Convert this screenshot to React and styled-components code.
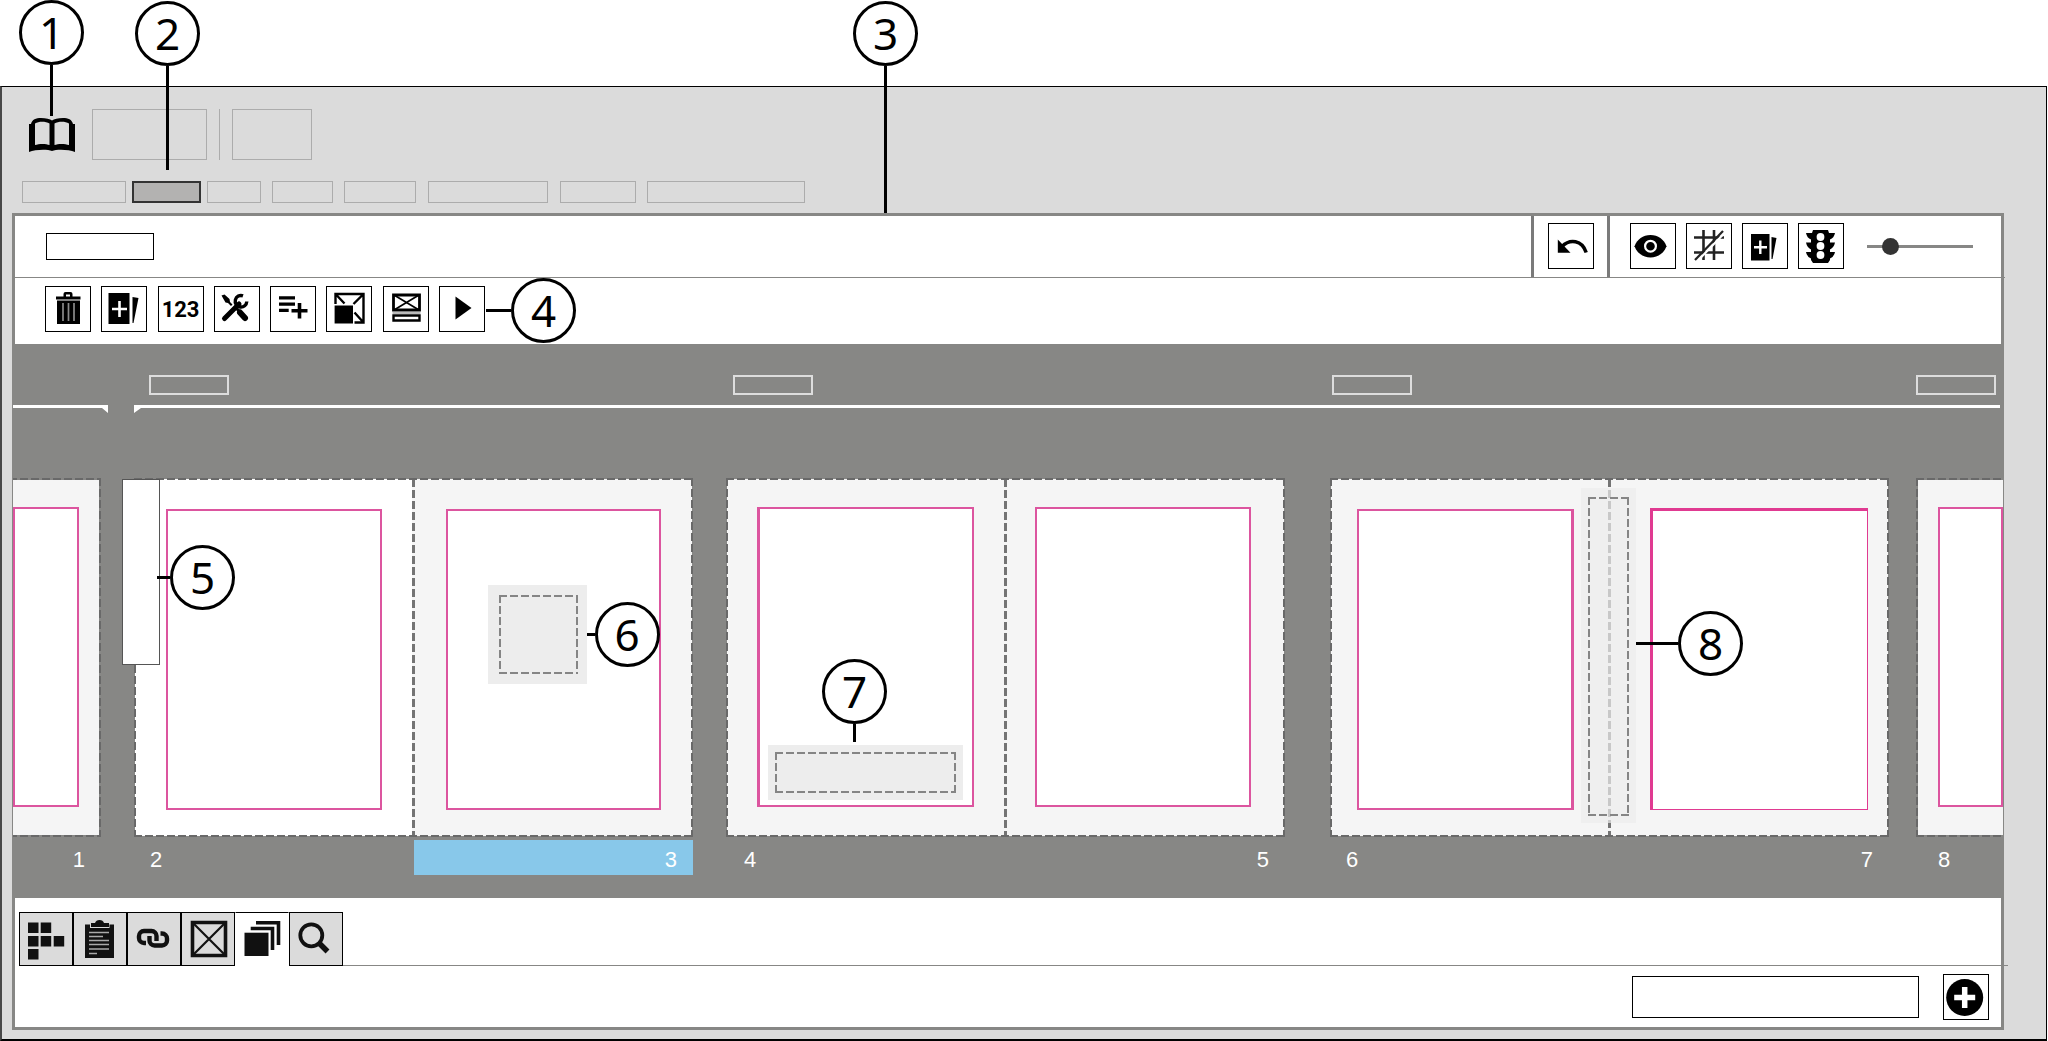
import React from 'react';
import styled, { createGlobalStyle, css } from 'styled-components';

const GlobalStyle = createGlobalStyle`
  * {
    box-sizing: border-box;
  }

  body {
    margin: 0;
    background: #ffffff;
    font-family: "Liberation Sans", Arial, sans-serif;
  }

  button,
  input {
    margin: 0;
    padding: 0;
    font: inherit;
  }
`;

const line = '#878785';
const pink = '#dc559f';

const dashX = color => `repeating-linear-gradient(90deg, ${color} 0 8px, transparent 8px 11px)`;
const dashY = color => `repeating-linear-gradient(180deg, ${color} 0 8px, transparent 8px 11px)`;

const dashedFrame = (color, size) => css`
  background-image: ${dashX(color)}, ${dashX(color)}, ${dashY(color)}, ${dashY(color)};
  background-position: top, bottom, left, right;
  background-size: 100% ${size}, 100% ${size}, ${size} 100%, ${size} 100%;
  background-repeat: no-repeat;
`;

const Window = styled.div`
  margin: 86px 1px 0 0;
  border: solid #000000;
  border-width: 1px 1px 2px 2px;
  border-left-color: #484848;
  background: #dbdbdb;
`;

const Header = styled.header`
  display: flex;
  align-items: center;
  gap: 12px;
  padding: 22px 27px 0;
`;

const BookLink = styled.a`
  position: relative;
  display: block;
  width: 46px;
  height: 34px;
  margin-right: 5px;
  color: #000000;
`;

const HeaderButton = styled.button`
  width: ${props => props.$width};
  height: 51px;
  border: 1px solid #acacac;
  background: none;
`;

const HeaderDivider = styled.span`
  width: 1px;
  height: 51px;
  background: #acacac;
`;

const Nav = styled.nav`
  display: flex;
  padding: 21px 20px 0;
`;

const NavButton = styled.button`
  position: relative;
  width: ${props => props.$width};
  height: 22px;
  margin-left: ${props => props.$before};
  border: ${props => (props.$active ? '2px solid #333333' : '1px solid #acacac')};
  background: ${props => (props.$active ? '#b3b2b1' : 'none')};
`;

const Panel = styled.main`
  position: relative;
  margin: 10px 42px 9px 10px;
  border: 3px solid ${line};
  background: #ffffff;
`;

const TitleBar = styled.div`
  display: flex;
  height: 61px;
`;

const TitleCell = styled.div`
  display: flex;
  flex: 1;
  align-items: center;
  padding-left: 31px;
`;

const TitleField = styled.input`
  width: 108px;
  height: 27px;
  border: 1px solid #000000;
  background: #ffffff;
`;

const ToolGroup = styled.div`
  display: flex;
  align-items: center;
  gap: 10px;
  padding: ${props => props.$padding};
  border-left: 3px solid #7a7a7a;
`;

const Rule = styled.div`
  height: 1px;
  margin-right: -4px;
  background: ${line};
`;

const ToolButton = styled.button`
  position: relative;
  display: flex;
  align-items: center;
  justify-content: center;
  flex: none;
  width: 46px;
  height: 46px;
  border: 1px solid #000000;
  background: #ffffff;
  color: #000000;

  svg {
    display: block;
    width: 44px;
    height: 44px;
  }
`;

const NumberingText = styled.span`
  font-family: Roboto, sans-serif;
  font-size: 22px;
  font-weight: 700;
`;

const Zoom = styled.input`
  appearance: none;
  width: 106px;
  height: 18px;
  margin-left: 13px;
  background: linear-gradient(${line}, ${line}) center / 100% 3px no-repeat;

  &::-webkit-slider-thumb {
    appearance: none;
    width: 17px;
    height: 17px;
    border-radius: 50%;
    background: #333333;
  }
`;

const Toolbar = styled.div`
  display: flex;
  justify-content: space-between;
  width: 470px;
  padding: 8px 0 12px 30px;
`;

const Canvas = styled.section`
  margin: 0 -2px;
  padding: 31px 0 23px;
  background: ${line};
`;

const SpreadGrid = styled.div`
  display: grid;
  grid-template-columns: 88fr 33px 559fr 33px 559fr 45px 559fr 27px 87fr;
`;

const SpreadLabel = styled.div`
  grid-column: ${props => props.$column};
  width: 80px;
  height: 20px;
  margin-left: ${props => props.$indent || 0};
  border: 2px solid #dddddd;
`;

const Brackets = styled.div`
  display: grid;
  grid-template-columns: 95fr 26px 1866fr;
  height: 8px;
  margin: 10px 3px 65px 0;
`;

const Bracket = styled.div`
  grid-column: ${props => props.$column};
  background: #ffffff;
  clip-path: ${props => (props.$open === 'left'
    ? 'polygon(0 0, 100% 0, 100% 100%, calc(100% - 6px) 3px, 0 3px)'
    : 'polygon(0 0, 100% 0, 100% 3px, 7px 3px, 0 100%)')};
`;

const Spread = styled.div`
  position: relative;
  grid-column: ${props => props.$column};
  display: grid;
  grid-auto-columns: 1fr;
  grid-auto-flow: column;
  height: 359px;
  padding: ${props => props.$padding || '1px'};
  overflow: ${props => (props.$cut ? 'hidden' : 'visible')};

  &::after {
    content: "";
    position: absolute;
    inset: ${props => props.$cut || '0'};
    ${dashedFrame('#696969', '2px')}
  }
`;

const Page = styled.div`
  display: flex;
  padding: ${props => props.$padding};
  background: ${props => props.$color || '#f5f5f5'};

  & + & {
    margin-left: -2px;
    background-image: ${dashY('#747474')};
    background-size: 3px 100%;
    background-repeat: no-repeat;
  }
`;

const SafeArea = styled.div`
  position: relative;
  flex: 1;
  border: 2px solid ${props => props.$color || pink};
  border-width: ${props => props.$border || '2px'};
  background: #ffffff;
`;

const SpineTab = styled.div`
  position: absolute;
  z-index: 1;
  top: 1px;
  left: -12px;
  width: 38px;
  height: 186px;
  border: 1px solid #555555;
  background: #ffffff;
`;

// a drop zone lying freely on a page or over the fold
const Placeholder = styled.div`
  position: absolute;
  z-index: 1;
  left: ${props => props.$left};
  top: ${props => props.$top};
  width: ${props => props.$width};
  height: ${props => props.$height};
  background: rgba(237, 237, 237, ${props => props.$opacity || 1});

  &::before {
    content: "";
    position: absolute;
    inset: ${props => props.$inset};
    ${dashedFrame('#858585', '2px')}
  }
`;

const PageNumbers = styled.div`
  grid-column: ${props => props.$column};
  display: grid;
  grid-auto-columns: 1fr;
  grid-auto-flow: column;
  margin-top: 3px;
`;

const PageNumber = styled.span`
  padding: 5px ${props => props.$indent || '16px'} 0;
  background: ${props => (props.$selected ? '#88c8ea' : 'none')};
  color: #ffffff;
  font-size: 22px;
  line-height: 30px;
  text-align: ${props => props.$align};
`;

const TabStrip = styled.div`
  display: flex;
  margin-right: -7px;
  padding: 14px 0 0 4px;

  &::after {
    content: "";
    flex: 1;
    border-bottom: 1px solid ${line};
  }
`;

const Tab = styled.button`
  width: 54px;
  height: 54px;
  border: 1px solid #000000;
  border-color: ${props => (props.$active ? '#000000 transparent transparent' : '#000000')};
  background: ${props => (props.$active ? '#ffffff' : '#dbdbdb')};
  color: #111111;

  svg {
    display: block;
    width: 52px;
    height: 52px;
  }
`;

const Footer = styled.footer`
  display: flex;
  align-items: center;
  justify-content: flex-end;
  gap: 24px;
  padding: 8px 12px 7px;
`;

const SearchField = styled.input`
  width: 287px;
  height: 42px;
  border: 1px solid #000000;
  background: #ffffff;
`;

const CalloutBox = styled.span`
  position: absolute;
  z-index: 2;
  left: ${props => props.$left};
  top: ${props => props.$top || 'auto'};
  bottom: ${props => props.$bottom || 'auto'};
  display: flex;
  flex-direction: ${props => (props.$side ? 'row-reverse' : 'column')};
  align-items: center;
  pointer-events: none;
`;

const Disc = styled.span`
  display: block;
  width: 65px;
  height: 65px;
  border: 3px solid #000000;
  border-radius: 50%;
  background: #ffffff;
  color: #000000;
  font-family: "Noto Sans", "Open Sans", sans-serif;
  font-size: 44px;
  line-height: 59px;
  text-align: center;
`;

const Stem = styled.span`
  width: ${props => (props.$side ? props.$length : '3px')};
  height: ${props => (props.$side ? '3px' : props.$length)};
  background: #000000;
`;

const Callout = ({ number, stem, side, left, top, bottom }) => (
  <CalloutBox $side={side} $left={left} $top={top} $bottom={bottom}>
    <Disc>{number}</Disc>
    <Stem $side={side} $length={stem} />
  </CalloutBox>
);

const ToolIcon = ({ children }) => (
  <svg viewBox="1 1 44 44" fill="currentColor" aria-hidden="true">{children}</svg>
);

const TabIcon = ({ children }) => (
  <svg viewBox="1 1 52 52" fill="currentColor" aria-hidden="true">{children}</svg>
);

const BookIcon = () => (
  <svg width="46" height="34" viewBox="0 0 46 34" fill="currentColor" aria-hidden="true">
    <path
      fillRule="evenodd"
      d="M0 6H2C3 1.500 7 0 12 0C17 0 21 1 23 2.500C25 1 29 0 34 0C39 0 43 1.500 44 6H46V34C40 31.500 28 31 23 33C18 31 6 31.500 0 34ZM6 5.500V27C10 25.500 17 25.500 20.500 27V5.500C17 3.500 10 3 6 5.500ZM25.500 5.500V27C29 25.500 36 25.500 40 27V5.500C36 3 29 3.500 25.500 5.500Z"
    />
  </svg>
);

const TrashIcon = () => (
  <ToolIcon>
    <path d="M11 10.500h7.500V8q0-2 2-2h5q2 0 2 2v2.500H35.500V13.500H11zM21 8.500v2h4v-2z" fillRule="evenodd" />
    <path d="M12 14.500H35V38H12z" />
    <path d="M18 17v18M23.500 17v18M29 17v18" stroke="#8a8a8a" strokeWidth="1.700" />
  </ToolIcon>
);

const AddPageIcon = () => (
  <ToolIcon>
    <path d="M7.500 7H28.500V38H7.500zM31.500 11L37.500 12L32.500 37H31.500z" />
    <path d="M18.500 15v16M11 23h15" stroke="#ffffff" strokeWidth="2.600" />
  </ToolIcon>
);

const AddPageSmallIcon = () => (
  <ToolIcon>
    <path d="M9 11H27.500V37.500H9zM29.500 14L34.500 15L30.500 36H29.500z" />
    <path d="M18.300 17.500v13.500M12 24.300h13" stroke="#ffffff" strokeWidth="2.400" />
  </ToolIcon>
);

const ToolsIcon = () => (
  <ToolIcon>
    <path d="M10.500 32.500L25 18" stroke="currentColor" strokeWidth="5" strokeLinecap="round" />
    <path d="M29 9.800A5.800 5.800 0 1 0 32.800 15.500" fill="none" stroke="currentColor" strokeWidth="3.400" />
    <path d="M7.500 9.500L10.500 8.500L15.500 13L16 16L18.500 18.500L17 20L14 17L11.500 16.500z" />
    <path d="M26 26.500L31 32" stroke="currentColor" strokeWidth="6" strokeLinecap="round" />
    <path d="M22.500 22.500L26 26" stroke="currentColor" strokeWidth="3" />
  </ToolIcon>
);

const ListAddIcon = () => (
  <ToolIcon>
    <path d="M9 10.300H25V13.500H9zM9 16.500H25V19.700H9zM9 22.700H18.700V25.900H9z" />
    <path d="M29.500 17v15.500M21.500 24.700h16" stroke="currentColor" strokeWidth="3.600" />
  </ToolIcon>
);

const ResizeIcon = () => (
  <ToolIcon>
    <path
      d="M9.500 18V8H37.500V36.500H28.500M9.500 8L18.500 17.500M37.500 8L27.500 18M28.500 26.500L37.500 36.500"
      fill="none"
      stroke="currentColor"
      strokeWidth="2.400"
    />
    <path d="M8.600 19.500H27V37.500H8.600z" />
  </ToolIcon>
);

const BoxListIcon = () => (
  <ToolIcon>
    <path d="M10.500 9H36.500V24H10.500z" fill="none" stroke="currentColor" strokeWidth="2.800" />
    <path d="M11 9L36 24M36 9L11 24" stroke="currentColor" strokeWidth="1.700" />
    <path d="M10.500 29.500H36.500V34.500H10.500z" fill="none" stroke="currentColor" strokeWidth="2.400" />
    <path d="M9.500 27H37.500" stroke="#777777" strokeWidth="1" />
  </ToolIcon>
);

const PlayIcon = () => (
  <ToolIcon>
    <path d="M16.500 10.500L32.500 22L16.500 33.500z" />
  </ToolIcon>
);

const UndoIcon = () => (
  <ToolIcon>
    <path d="M9.800 16.500L22.500 29.800H9.800z" />
    <path d="M14 23.500C22 15.500 34 17 38.200 29.500" fill="none" stroke="currentColor" strokeWidth="3.500" />
  </ToolIcon>
);

const EyeIcon = () => (
  <ToolIcon>
    <path d="M4.500 23.200C7 16.500 13 12 20.500 12S34 16.500 36.500 23.200C34 30 28 34.500 20.500 34.500S7 30 4.500 23.200z" />
    <circle cx="20.500" cy="23.200" r="5.400" fill="none" stroke="#ffffff" strokeWidth="2.200" />
  </ToolIcon>
);

const GridOffIcon = () => (
  <ToolIcon>
    <path d="M17.500 7v30M28 7v30M8 14.500h30M8 29.500h30" stroke="#222222" strokeWidth="2.600" />
    <path d="M39 9.500L11 38.500" stroke="#ffffff" strokeWidth="2.200" />
    <path d="M37 8L9 37" stroke="#222222" strokeWidth="2.200" />
  </ToolIcon>
);

const TrafficIcon = () => (
  <ToolIcon>
    <path d="M15 7H30L31 10H37Q36 15 32 16.500V19.500H37Q36 24.500 32 26.500V29H37Q36 34 32 35.500V37L30 40H15L13 37V35.500Q9 34 8 29H13V26.500Q9 24.500 8 19.500H13V16.500Q9 15 8 10H14z" />
    <g fill="#ffffff">
      <circle cx="22.500" cy="14" r="3.900" />
      <circle cx="22.500" cy="23" r="3.900" />
      <circle cx="22.500" cy="32" r="3.900" />
    </g>
  </ToolIcon>
);

const AddCircleIcon = () => (
  <ToolIcon>
    <circle cx="21.700" cy="23.500" r="18.500" />
    <path d="M21.700 13v21M11.200 23.500h21" stroke="#ffffff" strokeWidth="5.500" />
  </ToolIcon>
);

const BlocksIcon = () => (
  <TabIcon>
    <path d="M9 10.500h10.500v10.500H9zM21.700 10.500h10.500v10.500h-10.500zM9 24h10.500v10.500H9zM21.700 24h10.500v10.500h-10.500zM34.700 24h10.500v10.500h-10.500zM9 37h10.500v10.500H9z" />
  </TabIcon>
);

const ClipboardIcon = () => (
  <TabIcon>
    <path d="M12 12.500h5v3.500h19.500v-3.500h4.500v33.500H12zM18 15v-4h4q1-3 4.500-3t4.500 3h5v4z" />
    <path
      d="M16 20.500h20M16 24.500h14M16 28.500h20M16 32.500h20M16 37h20M16 41.500h8"
      stroke="#aaaaaa"
      strokeWidth="1.400"
    />
  </TabIcon>
);

const LinkIcon = () => (
  <TabIcon>
    <g fill="none" stroke="currentColor" strokeWidth="4.400">
      <path d="M19 31h-2a5 5 0 0 1-5-5v-2a5 5 0 0 1 5-5h7.500a5 5 0 0 1 5 5v5" />
      <path d="M33.500 21.500h1.500a5 5 0 0 1 5 5v2a5 5 0 0 1-5 5h-7.500a5 5 0 0 1-5-5v-4.500" />
    </g>
  </TabIcon>
);

const BoxIcon = () => (
  <TabIcon>
    <path d="M11.500 10.500H44.500V43.500H11.500z" fill="none" stroke="currentColor" strokeWidth="3.600" />
    <path d="M12 11L44 43M44 11L12 43" stroke="currentColor" strokeWidth="2.200" />
  </TabIcon>
);

const CopiesIcon = () => (
  <TabIcon>
    <path d="M9.500 20.700H33.500V44H9.500z" />
    <path d="M15.700 16.500H37.500V38M21 10.800H43.500V33" fill="none" stroke="currentColor" strokeWidth="3.600" />
  </TabIcon>
);

const SearchIcon = () => (
  <TabIcon>
    <circle cx="22.300" cy="23.300" r="11" fill="none" stroke="currentColor" strokeWidth="3.800" />
    <path d="M30 31L38.500 39.500" stroke="currentColor" strokeWidth="5.500" />
  </TabIcon>
);

const menus = [
  { label: 'Menu 1', width: '104px', before: '0px' },
  { label: 'Menu 2', width: '69px', before: '6px', active: true },
  { label: 'Menu 3', width: '54px', before: '6px' },
  { label: 'Menu 4', width: '61px', before: '11px' },
  { label: 'Menu 5', width: '72px', before: '11px' },
  { label: 'Menu 6', width: '120px', before: '12px' },
  { label: 'Menu 7', width: '76px', before: '12px' },
  { label: 'Menu 8', width: '158px', before: '11px' },
];

const tools = [
  { label: 'Delete', icon: <TrashIcon /> },
  { label: 'Add pages', icon: <AddPageIcon /> },
  { label: 'Numbering', icon: <NumberingText>123</NumberingText> },
  { label: 'Settings', icon: <ToolsIcon /> },
  { label: 'Add to list', icon: <ListAddIcon /> },
  { label: 'Resize', icon: <ResizeIcon /> },
  { label: 'Layout', icon: <BoxListIcon /> },
];

const viewTools = [
  { label: 'Preview', icon: <EyeIcon /> },
  { label: 'Grid', icon: <GridOffIcon /> },
  { label: 'Add pages', icon: <AddPageSmallIcon /> },
  { label: 'Status', icon: <TrafficIcon /> },
];

const tabs = [
  { label: 'Modules', icon: <BlocksIcon /> },
  { label: 'Clipboard', icon: <ClipboardIcon /> },
  { label: 'Links', icon: <LinkIcon /> },
  { label: 'Boxes', icon: <BoxIcon /> },
  { label: 'Pages', icon: <CopiesIcon />, active: true },
  { label: 'Search', icon: <SearchIcon /> },
];

const App = () => (
  <>
    <GlobalStyle />
    <Window>
      <Header>
        <BookLink href="#book" aria-label="Book">
          <BookIcon />
          <Callout number={1} stem="51px" left="-10px" bottom="calc(100% + 2px)" />
        </BookLink>
        <HeaderButton $width="115px" aria-label="Publication" />
        <HeaderDivider />
        <HeaderButton $width="80px" aria-label="Issue" />
      </Header>
      <Nav>
        {menus.map(menu => (
          <NavButton
            key={menu.label}
            aria-label={menu.label}
            $width={menu.width}
            $before={menu.before}
            $active={menu.active}
          >
            {menu.active && <Callout number={2} stem="104px" left="1px" bottom="calc(100% + 13px)" />}
          </NavButton>
        ))}
      </Nav>
      <Panel>
        <Callout number={3} stem="147px" left="838px" bottom="calc(100% + 3px)" />
        <TitleBar>
          <TitleCell>
            <TitleField aria-label="Title" />
          </TitleCell>
          <ToolGroup $padding="0 13px 1px 14px">
            <ToolButton aria-label="Undo"><UndoIcon /></ToolButton>
          </ToolGroup>
          <ToolGroup $padding="0 28px 1px 20px">
            {viewTools.map(tool => (
              <ToolButton key={tool.label} aria-label={tool.label}>{tool.icon}</ToolButton>
            ))}
            <Zoom type="range" aria-label="Zoom" min="0" max="100" defaultValue="17" />
          </ToolGroup>
        </TitleBar>
        <Rule />
        <Toolbar>
          {tools.map(tool => (
            <ToolButton key={tool.label} aria-label={tool.label}>{tool.icon}</ToolButton>
          ))}
          <ToolButton aria-label="Play">
            <PlayIcon />
            <Callout number={4} side stem="25px" left="calc(100% + 2px)" top="-9px" />
          </ToolButton>
        </Toolbar>
        <Canvas>
          <SpreadGrid>
            <SpreadLabel $column={3} $indent="15px" />
            <SpreadLabel $column={5} $indent="7px" />
            <SpreadLabel $column={7} $indent="2px" />
            <SpreadLabel $column={9} />
          </SpreadGrid>
          <Brackets>
            <Bracket $column={1} $open="left" />
            <Bracket $column={3} />
          </Brackets>
          <SpreadGrid>
            <Spread $column={1} $padding="2px 2px 2px 0" $cut="0 0 0 -4px">
              <Page $padding="27px 20px 28px 0"><SafeArea /></Page>
            </Spread>
            <Spread $column={3}>
              <Page $padding="30px 32px 26px 31px" $color="#ffffff"><SafeArea /></Page>
              <Page $padding="30px 31px 26px 34px">
                <SafeArea>
                  <Placeholder $left="40px" $top="74px" $width="99px" $height="99px" $inset="10px 9px 10px 11px">
                    <Callout number={6} side stem="8px" left="100%" top="17px" />
                  </Placeholder>
                </SafeArea>
              </Page>
              <SpineTab>
                <Callout number={5} side stem="13px" left="calc(100% - 2px)" top="65px" />
              </SpineTab>
            </Spread>
            <Spread $column={5}>
              <Page $padding="28px 32px 29px 30px">
                <SafeArea $border="2px 2px 2px 3px">
                  <Placeholder $left="8px" $top="236px" $width="195px" $height="55px" $inset="7px">
                    <Callout number={7} stem="18px" left="54px" bottom="calc(100% + 3px)" />
                  </Placeholder>
                </SafeArea>
              </Page>
              <Page $padding="28px 33px 29px 31px"><SafeArea /></Page>
            </Spread>
            <Spread $column={7}>
              <Page $padding="30px 36px 26px 26px"><SafeArea $border="2px 3px 2px 2px" /></Page>
              <Page $padding="29px 20px 26px 42px"><SafeArea $color="#e03a91" $border="3px 1px 1px 3px" /></Page>
              <Placeholder
                $left="251px"
                $top="10px"
                $width="55px"
                $height="335px"
                $inset="9px 7px 7px"
                $opacity="0.7"
              >
                <Callout number={8} side stem="42px" left="100%" top="123px" />
              </Placeholder>
            </Spread>
            <Spread $column={9} $padding="2px 0 2px 2px" $cut="0 -4px 0 0">
              <Page $padding="27px 0 28px 20px"><SafeArea /></Page>
            </Spread>
          </SpreadGrid>
          <SpreadGrid>
            <PageNumbers $column={1}>
              <PageNumber $align="right">1</PageNumber>
            </PageNumbers>
            <PageNumbers $column={3}>
              <PageNumber $align="left">2</PageNumber>
              <PageNumber $align="right" $selected>3</PageNumber>
            </PageNumbers>
            <PageNumbers $column={5}>
              <PageNumber $align="left" $indent="18px">4</PageNumber>
              <PageNumber $align="right">5</PageNumber>
            </PageNumbers>
            <PageNumbers $column={7}>
              <PageNumber $align="left">6</PageNumber>
              <PageNumber $align="right">7</PageNumber>
            </PageNumbers>
            <PageNumbers $column={9}>
              <PageNumber $align="left" $indent="22px">8</PageNumber>
            </PageNumbers>
          </SpreadGrid>
        </Canvas>
        <TabStrip role="tablist">
          {tabs.map(tab => (
            <Tab
              key={tab.label}
              role="tab"
              aria-label={tab.label}
              aria-selected={Boolean(tab.active)}
              $active={tab.active}
            >
              {tab.icon}
            </Tab>
          ))}
        </TabStrip>
        <Footer>
          <SearchField type="search" aria-label="Search pages" />
          <ToolButton aria-label="Add"><AddCircleIcon /></ToolButton>
        </Footer>
      </Panel>
    </Window>
  </>
);

export default App;
